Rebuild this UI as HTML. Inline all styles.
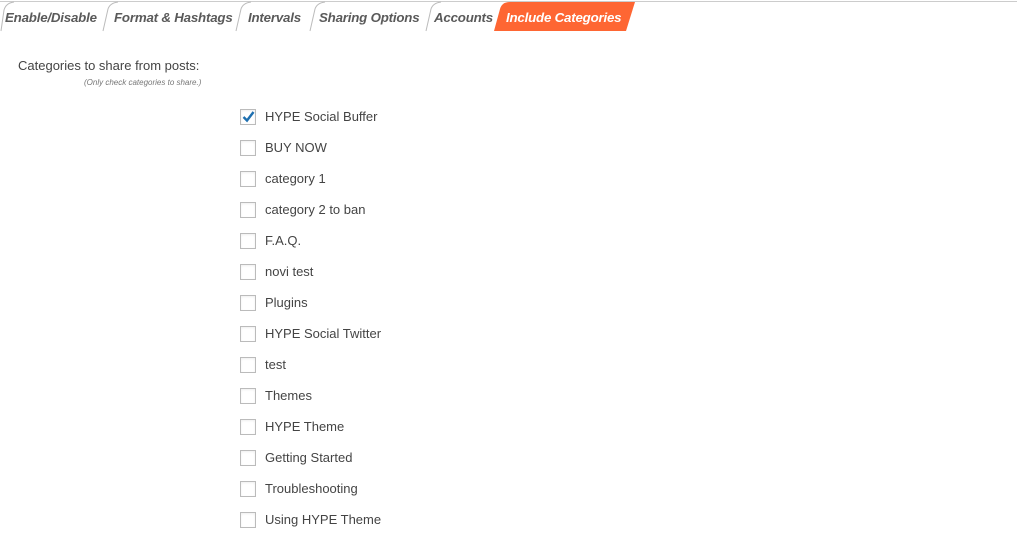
<!DOCTYPE html>
<html><head><style>
body{margin:0;width:1017px;height:547px;background:#fff;font-family:"Liberation Sans",sans-serif;position:relative;overflow:hidden;color:#444}
.t{position:absolute;top:10px;font-size:13.3px;font-style:italic;font-weight:bold;color:#5a5a5a;letter-spacing:-0.2px}
.lbl{position:absolute;left:18px;top:58px;font-size:13px;color:#444}
.note{position:absolute;left:84px;top:78px;font-size:8px;font-style:italic;color:#777}
.row{position:absolute;left:240px;height:16px}
.cb{position:absolute;left:0;top:0;width:14px;height:14px;border:1px solid #bbb;background:#fff;box-shadow:inset 0 1px 2px rgba(0,0,0,.07)}
.row span{position:absolute;left:25px;top:0;font-size:13px;color:#444;white-space:nowrap}
</style></head><body>
<svg width="1017" height="40" style="position:absolute;left:0;top:0">
<line x1="0" y1="1.5" x2="1017" y2="1.5" stroke="#ccc" stroke-width="1"/>
<g fill="none" stroke="#bbb" stroke-width="1">
<path d="M1 31 L4 10 Q6 3 14 2"/>
<path d="M103 31 L108 9 Q110 3 118 2"/>
<path d="M236 31 L241 9 Q243 3 251 2"/>
<path d="M310 31 L315 9 Q317 3 325 2"/>
<path d="M426 31 L431 9 Q433 3 441 2"/>
</g>
<path d="M494 31 L500 9 Q502 2 510 2 L635 2 L626 31 Z" fill="#fe6633"/>
</svg>
<div class="t" style="left:5px">Enable/Disable</div>
<div class="t" style="left:114px">Format &amp; Hashtags</div>
<div class="t" style="left:248px">Intervals</div>
<div class="t" style="left:319px">Sharing Options</div>
<div class="t" style="left:434px">Accounts</div>
<div class="t" style="left:506px;color:#fff">Include Categories</div>
<div class="lbl">Categories to share from posts:</div>
<div class="note">(Only check categories to share.)</div>
<div class="row" style="top:109px"><div class="cb"><svg width="14" height="14" style="position:absolute;left:0;top:0"><path d="M2.5 7 L6 10.5 L12.5 2" fill="none" stroke="#1e6fb0" stroke-width="2.4"/></svg></div><span>HYPE Social Buffer</span></div>
<div class="row" style="top:140px"><div class="cb"></div><span>BUY NOW</span></div>
<div class="row" style="top:171px"><div class="cb"></div><span>category 1</span></div>
<div class="row" style="top:202px"><div class="cb"></div><span>category 2 to ban</span></div>
<div class="row" style="top:233px"><div class="cb"></div><span>F.A.Q.</span></div>
<div class="row" style="top:264px"><div class="cb"></div><span>novi test</span></div>
<div class="row" style="top:295px"><div class="cb"></div><span>Plugins</span></div>
<div class="row" style="top:326px"><div class="cb"></div><span>HYPE Social Twitter</span></div>
<div class="row" style="top:357px"><div class="cb"></div><span>test</span></div>
<div class="row" style="top:388px"><div class="cb"></div><span>Themes</span></div>
<div class="row" style="top:419px"><div class="cb"></div><span>HYPE Theme</span></div>
<div class="row" style="top:450px"><div class="cb"></div><span>Getting Started</span></div>
<div class="row" style="top:481px"><div class="cb"></div><span>Troubleshooting</span></div>
<div class="row" style="top:512px"><div class="cb"></div><span>Using HYPE Theme</span></div>
</body></html>
